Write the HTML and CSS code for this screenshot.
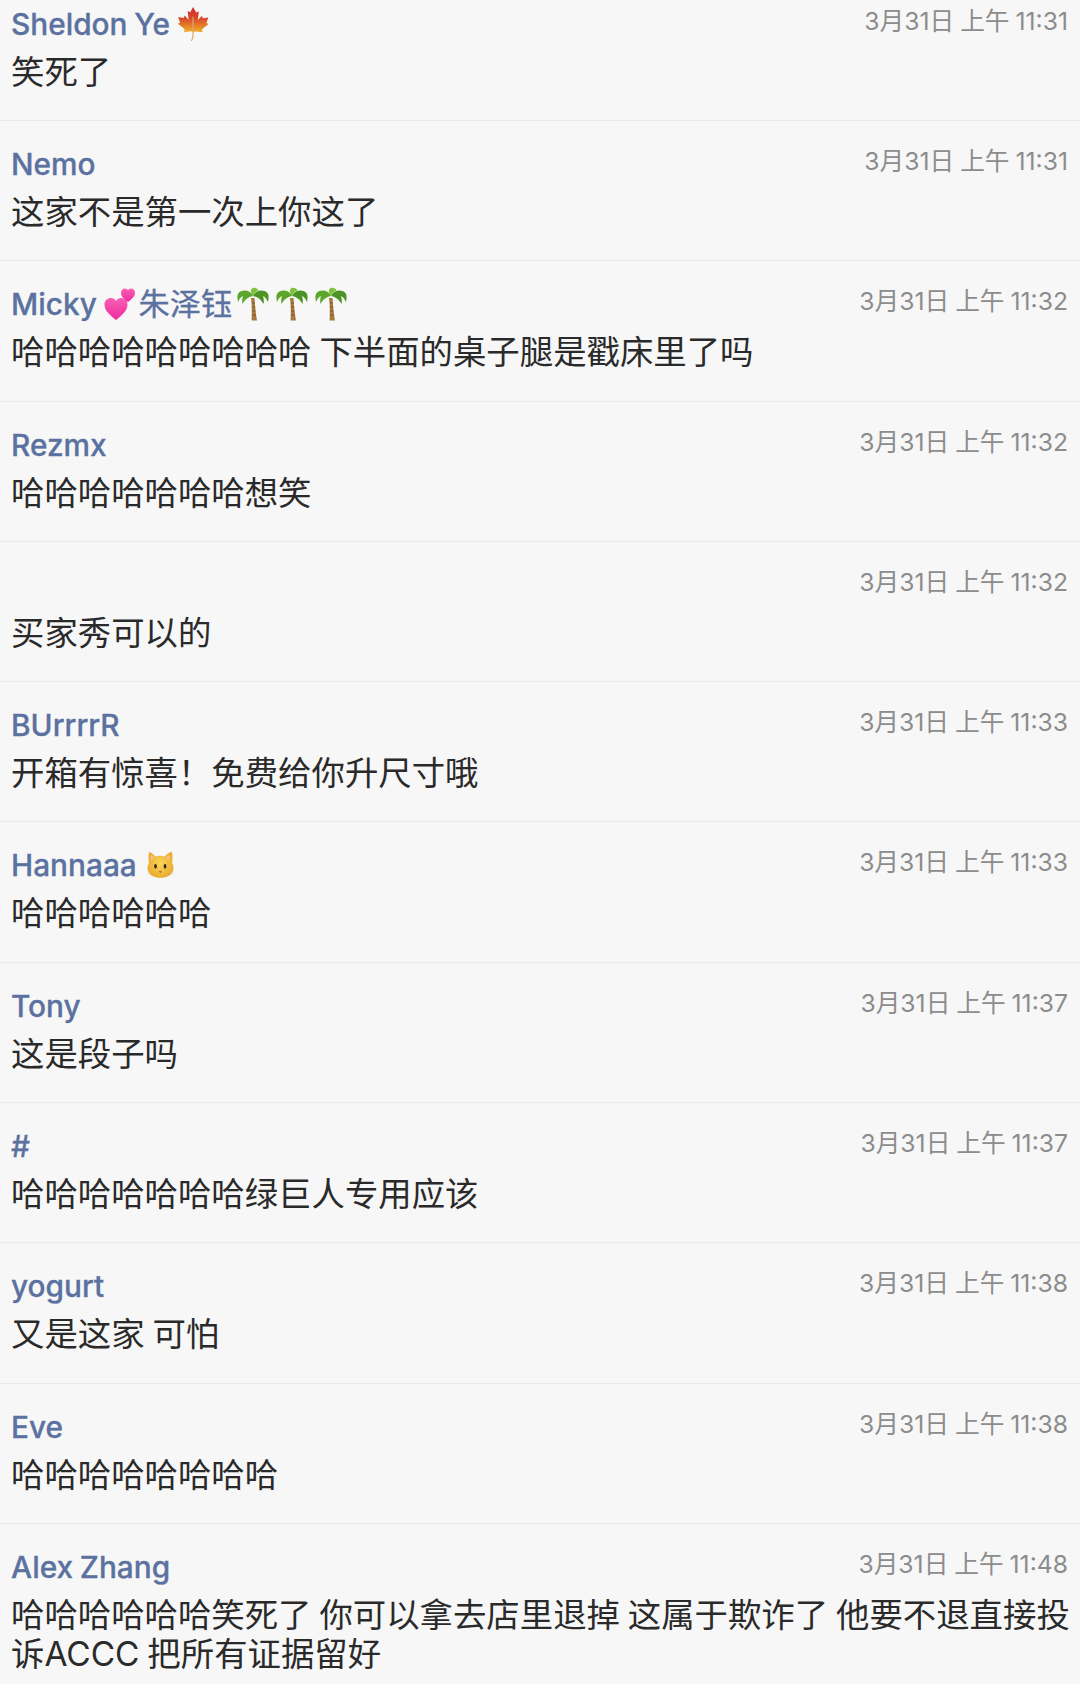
FILE: index.html
```html
<!DOCTYPE html>
<html lang="zh-CN">
<head>
<meta charset="utf-8">
<title>Comments</title>
<link rel="stylesheet" href="styles.css">
</head>
<body>
<svg class="defs" width="0" height="0" aria-hidden="true">
  <defs>
    <linearGradient id="leafGrad" x1="0" y1="0" x2="0" y2="1">
      <stop offset="0" stop-color="#cf2b2a"/>
      <stop offset=".45" stop-color="#d9482a"/>
      <stop offset=".8" stop-color="#e98a2a"/>
      <stop offset="1" stop-color="#f2b32e"/>
    </linearGradient>
    <linearGradient id="heartGrad" x1="0" y1="0" x2="0" y2="1">
      <stop offset="0" stop-color="#f85fb5"/>
      <stop offset="1" stop-color="#ee2a9d"/>
    </linearGradient>
    <radialGradient id="catGrad" cx=".5" cy=".45" r=".6">
      <stop offset="0" stop-color="#fcd65a"/>
      <stop offset="1" stop-color="#e9a72a"/>
    </radialGradient>
    <symbol id="leaf" viewBox="0 0 32 34">
      <path fill="url(#leafGrad)" d="M16 0l3.200 5.600 2.600-1.200-.9 8.600 4-4.300.9 2.600 5.500-.9-1.800 5.600 2 1-6.600 5.400.9 2.900-6.800-.9-2.400.5-.6-.1-2.400-.5-6.800.9.9-2.900L1 16.700l2-1-1.800-5.600 5.500.9.9-2.600 4 4.300-.9-8.600 2.600 1.200z"/>
      <path fill="none" stroke="#e0a56a" stroke-width="1.200" stroke-linecap="round" d="M16 10v18.500q0 3-1.500 5"/>
    </symbol>
    <symbol id="hearts" viewBox="0 0 32 34">
      <path fill="url(#heartGrad)" d="M12 33C6 28 .5 24 .5 17.500.5 13.500 3.500 11 6.800 11c2.400 0 4.200 1.200 5.200 3 1-1.800 2.800-3 5.200-3 3.300 0 6.300 2.500 6.300 6.500C23.500 24 18 28 12 33z"/>
      <path fill="url(#heartGrad)" d="M24 15c-3.600-3-7-5.300-7-9.300 0-2.500 1.900-4.200 4-4.200 1.400 0 2.400.7 3 1.800.6-1.100 1.600-1.800 3-1.800 2.100 0 4 1.700 4 4.200 0 4-3.400 6.300-7 9.300z"/>
    </symbol>
    <symbol id="palm" viewBox="0 0 32 34">
      <path fill="#a8793f" d="M14 11h3.600c.3 7 1 15 2.400 22.500h-5.400C14.900 26 15 18 14 11z"/>
      <path fill="none" stroke="#74522a" stroke-width=".8" d="M15 16h3M15 20h3.200M15 24h3.500M15 28h4"/>
      <path fill="#5da62c" d="M16 9C13 3 6 2 1.500 6 0 8 .2 11 1 15c2-4 3-5 5-6-1 3-1 5-.5 8C8 13 10 10.500 16 9z"/>
      <path fill="#4c9425" d="M16 9c3-6 10-7 14.500-3 1.500 2 1.300 5 .5 9-2-4-3-5-5-6 1 3 1 5 .5 8C24 13 22 10.500 16 9z"/>
      <path fill="#7fc23c" d="M16 9.500C13.500 5 13 3 15.500 1c2.500-.6 5 0 6 2.500-2.500.5-4.500 2.500-5.500 6z"/>
    </symbol>
    <symbol id="cat" viewBox="0 0 32 34">
      <path fill="url(#catGrad)" d="M2.500 2.500c3 .8 6 3 8 5 3.200-1 6.700-1 10 0 2-2 5-4.200 8-5 1 4.500 1 8.500.3 12.500 1.500 2.500 2 5 1.200 8-1.500 5.500-7.500 8-14 8s-12.500-2.500-14-8c-.8-3-.3-5.500 1.200-8-.7-4-.7-8 .3-12.500z"/>
      <path fill="#f3c3a0" d="M5 6c1.500.8 3 2 4 3l-3.500 2.500zM26 6c-1.500.8-3 2-4 3l3.500 2.500z"/>
      <ellipse cx="10.500" cy="18.500" rx="1.500" ry="2.500" fill="#3a2a14"/>
      <ellipse cx="21" cy="18.500" rx="1.500" ry="2.500" fill="#3a2a14"/>
      <path fill="#b06a50" d="M14 23.500h3.500l-1.750 2.500z"/>
      <path fill="none" stroke="#cfcfcf" stroke-width=".7" d="M1 27l4-1.500M31 27l-4-1.500"/>
    </symbol>
  </defs>
</svg>
<main class="list">
  <article class="row">
    <header class="head"><span class="name">Sheldon Ye <svg class="emoji"><use href="#leaf"/></svg></span><time class="time">3月31日 上午 11:31</time></header>
    <p class="msg">笑死了</p>
  </article>
  <article class="row">
    <header class="head"><span class="name">Nemo</span><time class="time">3月31日 上午 11:31</time></header>
    <p class="msg">这家不是第一次上你这了</p>
  </article>
  <article class="row">
    <header class="head"><span class="name">Micky <svg class="emoji emoji-hearts"><use href="#hearts"/></svg><span class="name-cjk">朱泽钰</span><svg class="emoji emoji-first"><use href="#palm"/></svg> <svg class="emoji"><use href="#palm"/></svg> <svg class="emoji"><use href="#palm"/></svg></span><time class="time">3月31日 上午 11:32</time></header>
    <p class="msg">哈哈哈哈哈哈哈哈哈 下半面的桌子腿是戳床里了吗</p>
  </article>
  <article class="row">
    <header class="head"><span class="name">Rezmx</span><time class="time">3月31日 上午 11:32</time></header>
    <p class="msg">哈哈哈哈哈哈哈想笑</p>
  </article>
  <article class="row">
    <header class="head"><span class="name"></span><time class="time">3月31日 上午 11:32</time></header>
    <p class="msg">买家秀可以的</p>
  </article>
  <article class="row">
    <header class="head"><span class="name">BUrrrrR</span><time class="time">3月31日 上午 11:33</time></header>
    <p class="msg">开箱有惊喜！免费给你升尺寸哦</p>
  </article>
  <article class="row">
    <header class="head"><span class="name">Hannaaa <svg class="emoji emoji-cat"><use href="#cat"/></svg></span><time class="time">3月31日 上午 11:33</time></header>
    <p class="msg">哈哈哈哈哈哈</p>
  </article>
  <article class="row">
    <header class="head"><span class="name">Tony</span><time class="time">3月31日 上午 11:37</time></header>
    <p class="msg">这是段子吗</p>
  </article>
  <article class="row">
    <header class="head"><span class="name">#</span><time class="time">3月31日 上午 11:37</time></header>
    <p class="msg">哈哈哈哈哈哈哈绿巨人专用应该</p>
  </article>
  <article class="row">
    <header class="head"><span class="name">yogurt</span><time class="time">3月31日 上午 11:38</time></header>
    <p class="msg">又是这家 可怕</p>
  </article>
  <article class="row">
    <header class="head"><span class="name">Eve</span><time class="time">3月31日 上午 11:38</time></header>
    <p class="msg">哈哈哈哈哈哈哈哈</p>
  </article>
  <article class="row">
    <header class="head"><span class="name">Alex Zhang</span><time class="time">3月31日 上午 11:48</time></header>
    <p class="msg">哈哈哈哈哈哈笑死了 你可以拿去店里退掉 这属于欺诈了 他要不退直接投诉ACCC 把所有证据留好</p>
  </article>
</main>
</body>
</html>
```

FILE: styles.css
```css
html, body {
  margin: 0;
  padding: 0;
  background: #f7f7f7;
}
body {
  height: 1684px;
  overflow: hidden;
  font-family: Inter, "Noto Sans CJK SC", sans-serif;
}
.defs {
  display: block;
  height: 0;
}
.list {
  display: flex;
  flex-direction: column;
}
.row {
  height: 140.3px;
  box-sizing: border-box;
  padding: 22px 12px 0 11px;
  border-bottom: 1px solid #eaeaea;
  flex: none;
}
.row:first-child {
  height: 121px;
  padding-top: 3px;
}
.row:last-child {
  border-bottom: 0;
}
.head {
  display: flex;
  justify-content: space-between;
  align-items: flex-start;
  height: 42px;
}
.name {
  font-size: 29.8px;
  font-weight: 500;
  line-height: 42px;
  word-spacing: -1.2px;
  color: #5b72a0;
  white-space: nowrap;
  -webkit-text-stroke: 0.3px #5b72a0;
}
.name-cjk {
  font-size: 31.2px;
  font-weight: 400;
  margin-left: 3px;
}
.emoji {
  width: 32px;
  height: 34px;
  vertical-align: -6px;
}
.emoji-first {
  margin-left: 5px;
}
.emoji-cat {
  width: 29px;
  margin-left: 3px;
}
.time {
  font-size: 24.7px;
  line-height: 36px;
  word-spacing: -1px;
  color: #8c8c8c;
  white-space: nowrap;
}
.msg {
  margin: 8px -6px 0 0;
  font-size: 33.4px;
  line-height: 39.5px;
  word-spacing: -1.5px;
  color: #2a2a2a;
}
```
